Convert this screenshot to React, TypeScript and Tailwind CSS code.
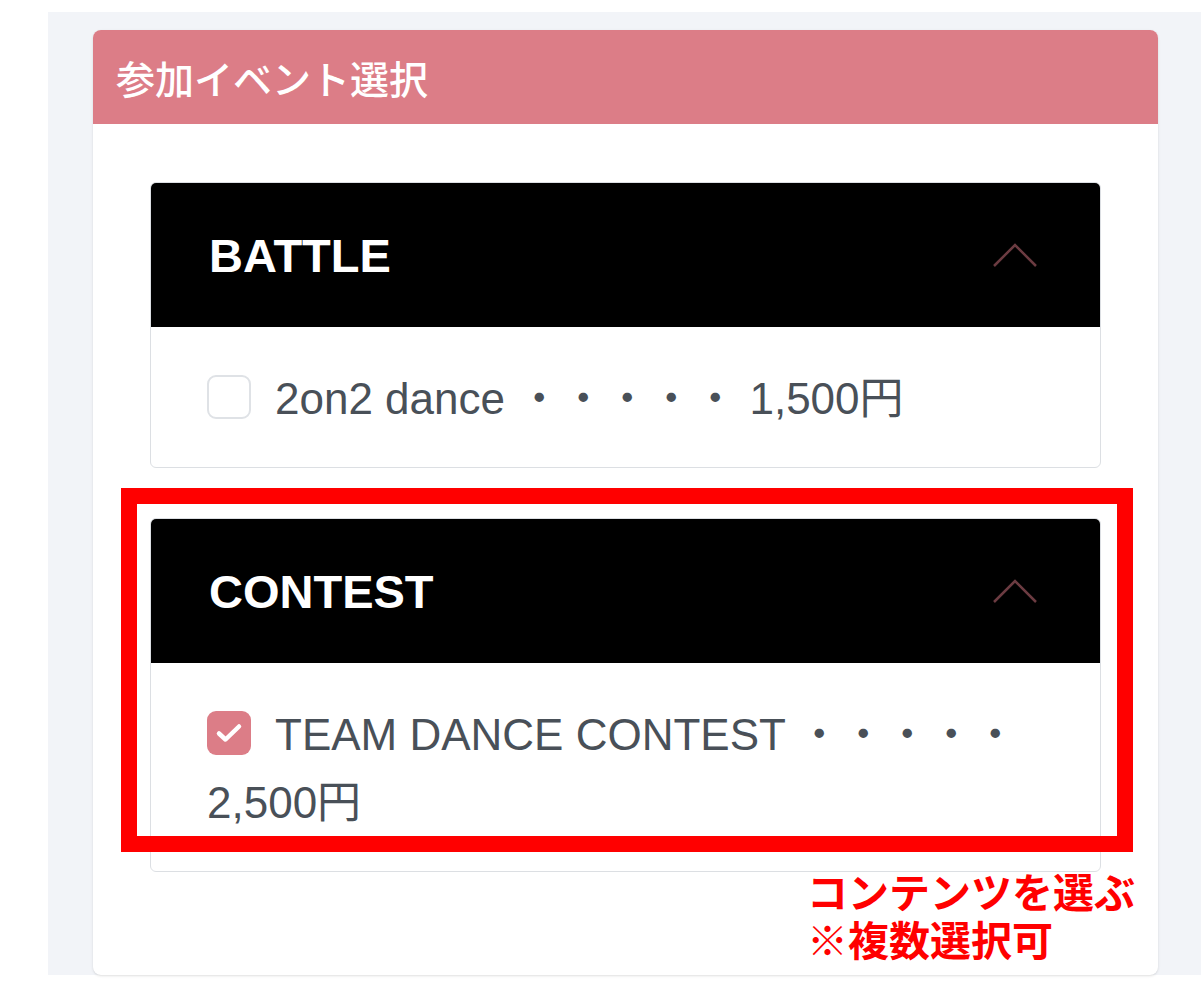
import React from 'react'

const latin = '"Liberation Sans", "Noto Sans CJK JP", Arial, sans-serif'
const cjk = '"Noto Sans CJK JP", "Liberation Sans", sans-serif'

const Chevron: React.FC = () => (
  <svg width="46" height="26" viewBox="0 0 46 26" fill="none">
    <polyline points="2,24 23,3 44,24" stroke="#6b3b41" strokeWidth="2.5" />
  </svg>
)

const Checkbox: React.FC<{ checked?: boolean }> = ({ checked }) =>
  checked ? (
    <span className="inline-block overflow-hidden w-[44px] h-[44px] mr-[24px] rounded-[9px] bg-[#dc7d87] align-[-5px]">
      <span className="flex w-full h-full items-center justify-center">
        <svg width="28" height="22" viewBox="0 0 28 22" fill="none">
          <polyline points="4,11.5 10.5,17.5 24,4.5" stroke="#fff" strokeWidth="4.5" strokeLinecap="round" strokeLinejoin="round" />
        </svg>
      </span>
    </span>
  ) : (
    <span className="inline-block overflow-hidden w-[44px] h-[44px] mr-[24px] rounded-[9px] border-2 border-[#dfe2e6] bg-white align-[-5px]" />
  )

const EventPanel: React.FC<{ title: string; label: string; price: string; checked?: boolean }> = ({
  title,
  label,
  price,
  checked,
}) => (
  <div className="rounded-[6px] border border-[#dcdfe3] overflow-hidden bg-white">
    <div className="h-[144px] bg-black flex items-center justify-between pl-[58px] pr-[62px]">
      <span className="text-white font-bold text-[47px] leading-none" style={{ fontFamily: latin }}>
        {title}
      </span>
      <Chevron />
    </div>
    <div
      className="px-[56px] pt-[38px] pb-[34px] text-[44px] leading-[68px] text-[#495058]"
      style={{ fontFamily: latin }}
    >
      <Checkbox checked={checked} />
      {label} ・・・・・ {price}
    </div>
  </div>
)

export default function App() {
  return (
    <div className="w-[1201px] h-[987px] bg-white pt-[12px] pl-[48px] overflow-hidden">
      <div className="h-[963px] bg-[#f2f4f8] pt-[18px] pl-[45px] pr-[43px]">
        <div className="relative h-[945px] bg-white rounded-[8px] shadow-sm overflow-hidden">
          <div className="h-[94px] bg-[#dc7d87] flex items-center pl-[23px]">
            <h2 className="text-white text-[39px] font-medium leading-none" style={{ fontFamily: cjk }}>
              参加イベント選択
            </h2>
          </div>
          <div className="px-[57px] pt-[58px] flex flex-col gap-[50px]">
            <EventPanel title="BATTLE" label="2on2 dance" price="1,500円" />
            <EventPanel title="CONTEST" label="TEAM DANCE CONTEST" price="2,500円" checked />
          </div>

          {/* annotation overlay */}
          <div className="absolute left-[28px] top-[458px] w-[1012px] h-[364px] border-[16px] border-[#ff0000]" />
          <div
            className="absolute left-[714px] top-[836px] text-[#ff0000] text-[41px] font-bold leading-[48px]"
            style={{ fontFamily: cjk }}
          >
            <div>コンテンツを選ぶ</div>
            <div>※複数選択可</div>
          </div>
        </div>
      </div>
    </div>
  )
}
